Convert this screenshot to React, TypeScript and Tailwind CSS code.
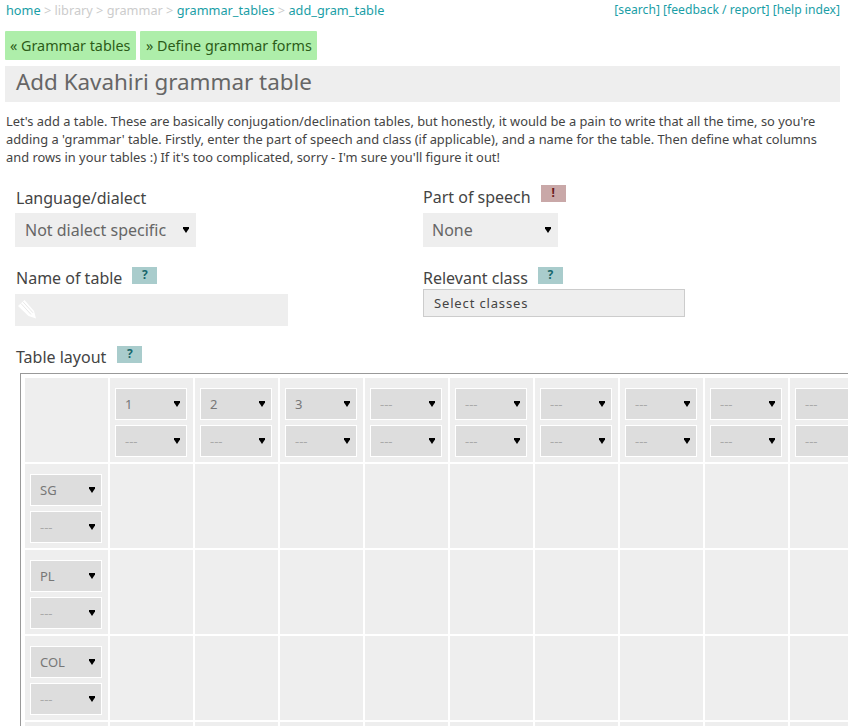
import { ReactNode } from "react";

const columnHeads = ["1", "2", "3", "---", "---", "---", "---", "---", "---"];
const rowHeads = ["SG", "PL", "COL", "---"];

const Badge = ({ kind = "help", className = "" }: { kind?: "help" | "warn"; className?: string }) => (
	<span
		className={
			kind === "warn"
				? `inline-block w-[25px] h-[17px] bg-[#c9a8a8] text-[#6b1818] text-[12px] leading-[15px] font-bold text-center ${className}`
				: `inline-block w-[25px] h-[17px] bg-[#a9cccc] text-[#17666b] text-[12px] leading-[15px] font-bold text-center ${className}`
		}
	>
		{kind === "warn" ? "!" : "?"}
	</span>
);

const Label = ({ children }: { children: ReactNode }) => (
	<span className="text-[16px] leading-[22px] text-[#444]">{children}</span>
);

// select arrow: the flat-topped black triangle
const Arrow = () => (
	<svg viewBox="0 0 6 6" className="absolute right-[7px] top-1/2 -mt-[3px] w-[6px] h-[6px] pointer-events-none">
		<path d="M0 0H6V1.5L3 6L0 1.5Z" fill="#000" />
	</svg>
);

const Pencil = () => (
	<svg viewBox="0 0 18 19" className="absolute left-[3px] top-[6px] w-[18px] h-[19px] pointer-events-none">
		<path d="M0 6L6.500 0L16 11L18 18.500L10.500 16Z" fill="#fff" />
		<path d="M3 3.500L13 14.500M5 1.800L15 12.800" stroke="#e2e2e2" strokeWidth="0.8" fill="none" />
	</svg>
);

const GridSelect = ({ value }: { value: string }) => (
	<div className="relative w-[72px] h-[32px]">
		<select
			defaultValue={value}
			className={`block appearance-none w-full h-full bg-[#ddd] border border-white pl-[9px] pt-[1px] text-[13px] ${value === "---" ? "text-[#aaa]" : "text-[#777]"}`}
		>
			<option>{value}</option>
		</select>
		<Arrow />
	</div>
);

export default function App() {
	return (
		<div className="w-[848px] h-[726px] overflow-hidden bg-white font-['Noto_Sans','Open_Sans',sans-serif] text-[#444]">
			<div className="flex justify-between pl-[6px] pr-[8px] pt-[1px] h-[31px]">
				<div className="text-[12.73px] leading-[18px] text-[#ccc]">
					<a className="text-[#1a9ea6]">home</a> &gt; library &gt; grammar &gt;{" "}
					<a className="text-[#1a9ea6]">grammar_tables</a> &gt;{" "}
					<a className="text-[#1a9ea6]">add_gram_table</a>
				</div>
				<div className="text-[12.15px] leading-[18px] text-[#1a9ea6]">[search] [feedback / report] [help index]</div>
			</div>

			<div className="flex gap-[4px] pl-[5px]">
				<a className="h-[29px] w-[131px] bg-[#aeeeaa] rounded-[1px] pl-[5px] text-[14.35px] leading-[29px] text-[#2c5c18]">« Grammar tables</a>
				<a className="h-[29px] w-[177px] bg-[#aeeeaa] rounded-[1px] pl-[6px] text-[14.35px] leading-[29px] text-[#2c5c18]">» Define grammar forms</a>
			</div>

			<h1 className="mt-[6px] ml-[5px] w-[835px] h-[36px] bg-[#eee] pl-[11px] text-[22.4px] leading-[32px] text-[#666]">
				Add Kavahiri grammar table
			</h1>

			<p className="mt-[10px] mx-[6px] w-[830px] text-[12.85px] leading-[18px] text-[#444]">
				Let's add a table. These are basically conjugation/declination tables, but honestly, it would be a pain to write that all the time, so you're
				adding a 'grammar' table. Firstly, enter the part of speech and class (if applicable), and a name for the table. Then define what columns
				and rows in your tables :) If it's too complicated, sorry - I'm sure you'll figure it out!
			</p>

			<div className="grid grid-cols-[408px_1fr] pl-[15px] mt-[20px]">
				<div className="h-[70px]">
					<div className="pl-[1px] h-[22px]"><Label>Language/dialect</Label></div>
					<div className="relative mt-[5px] w-[181px] h-[34px]">
						<select className="block appearance-none w-full h-full bg-[#eee] pl-[10px] text-[16px] text-[#666]">
							<option>Not dialect specific</option>
						</select>
						<Arrow />
					</div>
				</div>
				<div className="h-[70px]">
					<div className="flex items-start h-[22px]">
						<Label>Part of speech</Label>
						<Badge kind="warn" className="ml-[10px] -mt-[1px]" />
					</div>
					<div className="relative mt-[5px] w-[135px] h-[34px]">
						<select className="block appearance-none w-full h-full bg-[#eee] pl-[9px] text-[16px] text-[#666]">
							<option>None</option>
						</select>
						<Arrow />
					</div>
				</div>

				<div className="h-[90px] pt-[11px]">
					<div className="flex items-start pl-[1px] h-[22px]">
						<Label>Name of table</Label>
						<Badge className="ml-[10px]" />
					</div>
					<div className="relative mt-[5px] w-[273px] h-[32px]">
						<input className="block w-full h-full bg-[#eee] pl-[26px] text-[16px]" />
						<Pencil />
					</div>
				</div>
				<div className="h-[90px] pt-[11px]">
					<div className="flex items-start h-[22px]">
						<Label>Relevant class</Label>
						<Badge className="ml-[10px]" />
					</div>
					<button className="block w-[262px] h-[28px] bg-[#eee] border border-[#ccc] pl-[10px] pt-[1px] text-left text-[13px] tracking-[0.85px] text-[#444]">
						Select classes
					</button>
				</div>
			</div>

			<div className="flex items-start pl-[16px] h-[27px]">
				<Label>Table layout</Label>
				<Badge className="ml-[11px]" />
			</div>

			<table className="ml-[20px] w-[858px] border border-[#999] border-separate border-spacing-[2px] p-[2px] table-fixed">
				<tbody>
					<tr>
						<td className="h-[84px] bg-[#eee]"></td>
						{columnHeads.map((value, i) => (
							<td key={i} className="h-[84px] bg-[#eee] pl-[5px] pt-[10px] align-top">
								<div className="flex flex-col gap-[5px]">
									<GridSelect value={value} />
									<GridSelect value="---" />
								</div>
							</td>
						))}
					</tr>
					{rowHeads.map((value, r) => (
						<tr key={r}>
							<td className="h-[84px] bg-[#eee] pl-[5px] pt-[10px] align-top">
								<div className="flex flex-col gap-[5px]">
									<GridSelect value={value} />
									<GridSelect value="---" />
								</div>
							</td>
							{columnHeads.map((_, i) => (
								<td key={i} className="h-[84px] bg-[#eee]"></td>
							))}
						</tr>
					))}
				</tbody>
			</table>
		</div>
	);
}
